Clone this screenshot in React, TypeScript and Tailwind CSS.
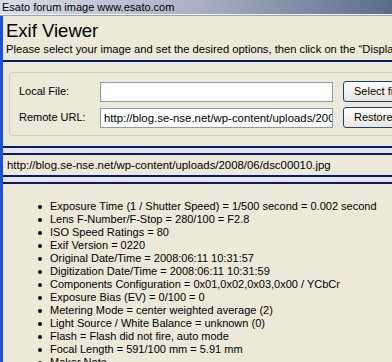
import * as React from "react";

const exifRows = [
  "Exposure Time (1 / Shutter Speed) = 1/500 second = 0.002 second",
  "Lens F-Number/F-Stop = 280/100 = F2.8",
  "ISO Speed Ratings = 80",
  "Exif Version = 0220",
  "Original Date/Time = 2008:06:11 10:31:57",
  "Digitization Date/Time = 2008:06:11 10:31:59",
  "Components Configuration = 0x01,0x02,0x03,0x00 / YCbCr",
  "Exposure Bias (EV) = 0/100 = 0",
  "Metering Mode = center weighted average (2)",
  "Light Source / White Balance = unknown (0)",
  "Flash = Flash did not fire, auto mode",
  "Focal Length = 591/100 mm = 5.91 mm",
  "Maker Note",
];

function Divider() {
  return <div className="h-[2px] bg-[#0B1B6C]" />;
}

function Gap() {
  return <div className="h-[5px] bg-[#E7E4EF]" />;
}

function XpButton({ children }: { children: React.ReactNode }) {
  return (
    <button className="h-[21px] shrink-0 whitespace-nowrap rounded-[3px] border border-[#1F3F78] bg-gradient-to-b from-[#FEFEFB] to-[#E9E7DE] px-[10px] text-[11px] leading-[19px] text-black">
      {children}
    </button>
  );
}

function FieldRow({ label, value }: { label: string; value?: string }) {
  return (
    <div className="flex h-[21px] items-center">
      <div className="w-[81px] shrink-0 text-[11px]">{label}</div>
      <div className="h-[20px] w-[233px] shrink-0 overflow-hidden whitespace-nowrap border border-[#7F9DB9] bg-white pl-[3px] text-[11.4px] leading-[18px]">
        {value}
      </div>
      <div className="w-[10px] shrink-0" />
    </div>
  );
}

export default function App() {
  return (
    <div className="h-[362px] w-[392px] overflow-hidden bg-[#ECE9D8] font-['Liberation_Sans',Arial,sans-serif] text-black">
      <div className="h-[14px] whitespace-nowrap bg-gradient-to-r from-[#D9DEE7] via-[#A9B2C4] to-[#5C6C88] pl-[2px] text-[11px] leading-[14px]">
        Esato forum image www.esato.com
      </div>
      <div className="h-px bg-[#F4F3EE]" />
      <div className="h-px bg-[#9FA3AA]" />

      <div className="flex">
        <div className="w-[3px] shrink-0 bg-[#1C4FDB]" />
        <div className="w-[560px] shrink-0">
          <div className="h-[44px] px-[3px] pt-[4px]">
            <div className="text-[18.5px] leading-[22px]">Exif Viewer</div>
            <div className="whitespace-nowrap text-[11.2px] leading-[14px]">
              Please select your image and set the desired options, then click on the “Display Exif” button
            </div>
          </div>
          <Divider />

          <div className="h-[84px] pl-[6px] pt-[10px]">
            <div className="flex h-[64px] w-[480px] flex-col gap-[5px] rounded-[3px] border border-[#D0D0BF] pl-[9px] pt-[8px]">
              <div className="flex items-center">
                <FieldRow label="Local File:" />
                <XpButton>Select file...</XpButton>
              </div>
              <div className="flex items-center">
                <FieldRow
                  label="Remote URL:"
                  value="http://blog.se-nse.net/wp-content/uploads/2008/06/dsc00010.jpg"
                />
                <XpButton>Restore defaults</XpButton>
              </div>
            </div>
          </div>

          <Divider />
          <Gap />
          <Divider />
          <div className="h-[20px] whitespace-nowrap pl-[4px] text-[11.4px] leading-[20px]">
            http://blog.se-nse.net/wp-content/uploads/2008/06/dsc00010.jpg
          </div>
          <Divider />
          <Gap />
          <Divider />

          <ul className="pt-[16px]">
            {exifRows.map((row) => (
              <li key={row} className="flex h-[13px] items-center whitespace-nowrap text-[11px] leading-[13px]">
                <span className="ml-[35px] mr-[8px] h-[4px] w-[4px] shrink-0 rounded-full bg-black" />
                <span>{row}</span>
              </li>
            ))}
          </ul>
        </div>
      </div>
    </div>
  );
}
